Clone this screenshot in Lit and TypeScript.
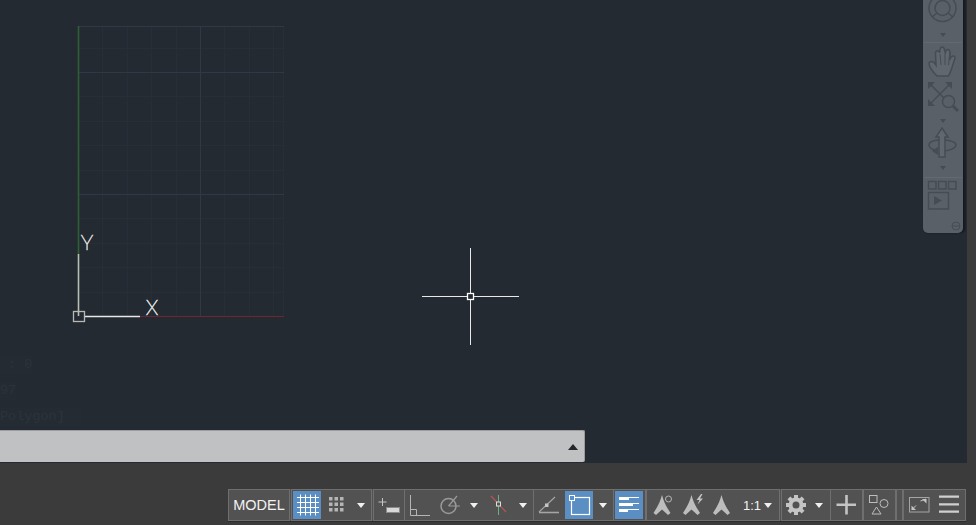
import { LitElement, html, svg, css } from "lit";
import { customElement } from "lit/decorators.js";

const ICON = "#c4c4c4";
const STEP = 24.4;

// ---------- status bar ----------

type Tool = { w: number; icon?: unknown; label?: string; on?: boolean; caret?: boolean };
type Group = { w: number; after?: number; tools: Tool[] };

const gridIcon = svg`<g stroke="#fff" stroke-width="1">
  ${[7.5, 12.5, 17.5, 22.5].map((x) => svg`<path d="M${x} 3.5V24.5" />`)}
  ${[6.5, 11.5, 16.5, 21.5].map((y) => svg`<path d="M4 ${y}H26" />`)}
</g>`;

const snapIcon = svg`<g fill="#b5b5b5">
  ${[8, 13.5, 19].map((x) => [6, 11.5, 17].map((y) => svg`<rect x=${x} y=${y} width="3.5" height="3.5" />`))}
</g>`;

const inferIcon = svg`<path d="M7.5 7V15M3.5 11H11.5" stroke=${ICON} fill="none" />
  <rect x="11.5" y="16.5" width="13" height="5" fill="#d8d8d8" stroke="#8a8a8a" />`;

const orthoIcon = svg`<path d="M4.5 4V24.5H24M4.5 18.5H10.5V24.5" stroke="#b5b5b5" fill="none" />`;

const polarIcon = svg`<circle cx="14.5" cy="15" r="7.5" stroke="#9a9a9a" stroke-width="1.5" fill="none" />
  <path d="M14.5 15H26M14.5 15L23 5" stroke="#9a9a9a" stroke-width="1.2" fill="none" />`;

const trackIcon = svg`<path d="M7 5L22 21" stroke="#b8525a" stroke-width="1.2" />
  <path d="M14.5 4V24" stroke="#62b47c" stroke-width="1" />
  <rect x="12.5" y="11" width="4" height="4" fill="#555" stroke="#ddd" />`;

const angleIcon = svg`<path d="M4 21L20 6" stroke="#a5a5a5" stroke-width="1.2" />
  <path d="M4 21.5H24" stroke="#a5a5a5" stroke-width="1.6" />
  <rect x="10" y="12.5" width="3.5" height="3.5" fill="#c4c4c4" />`;

const selectIcon = svg`<rect x="6.5" y="6.5" width="18" height="17" fill="none" stroke="#fff" stroke-width="1.2" />
  <rect x="4.5" y="4.5" width="5" height="5" fill="#5b8ec2" stroke="#fff" />`;

const rowsIcon = svg`<g fill="#fff">
  ${[6, 12, 18].map(
    (y, i) => svg`<rect x="4" y=${y} width=${[10, 14, 9][i]} height="3" />
      <rect x=${[14, 18, 13][i]} y=${y} width=${[10, 6, 11][i]} height="1" />`
  )}
</g>`;

// annotation scale marker, same outline three times with a different mark
const annoShape = svg`<path d="M14 4C15.5 9 16.5 13 22.5 22L20 24L14 18.5L8 24L5.5 22C11.5 13 12.5 9 14 4Z" fill="#bdbdbd" />`;
const annoCircle = svg`${annoShape}<circle cx="20.5" cy="8" r="3" fill="none" stroke="#b5b5b5" />`;
const annoBolt = svg`<g transform="translate(1.5 0)">${annoShape}</g>
  <path d="M25 3L20.5 9H23.5L21.5 13.5L27 7.5H24L26.5 3Z" fill="#c4c4c4" />`;
const annoPlain = svg`<g transform="translate(.5 0)">${annoShape}</g>`;

const gearIcon = svg`<g fill=${ICON}>
  ${[0, 45, 90, 135, 180, 225, 270, 315].map(
    (a) => svg`<rect x="11" y="4" width="4" height="4" transform="rotate(${a} 13 14)" />`
  )}
</g><circle cx="13" cy="14" r="5.5" fill="none" stroke=${ICON} stroke-width="4" />`;

const plusIcon = svg`<path d="M14.5 4V23.5M4.5 13.7H24" stroke=${ICON} stroke-width="2.6" />`;

const shapesIcon = svg`<g fill="none" stroke="#bdbdbd">
  <rect x="4.5" y="4.5" width="7.5" height="7" />
  <circle cx="19" cy="12.5" r="4" />
  <path d="M11.5 16L16 23H7Z" />
</g>`;

const fullIcon = svg`<rect x="4.5" y="6.5" width="19.5" height="14.5" fill="none" stroke="#a5a5a5" />
  <path d="M7 18.5L11 14.5M15.5 10L21 8" stroke="#c4c4c4" fill="none" />
  <path d="M6.5 14.5V19H11ZM17 8H21.5V12.5Z" fill="#c4c4c4" />`;

const menuIcon = svg`<path d="M6 5.7H26M6 13.3H26M6 20.7H26" stroke="#cfcfcf" stroke-width="2.2" />`;

const GROUPS: Group[] = [
  { w: 62, after: 1, tools: [{ w: 58, label: "MODEL" }] },
  {
    w: 81,
    after: 1,
    tools: [
      { w: 28, icon: gridIcon, on: true },
      { w: 30, icon: snapIcon },
      { w: 19, caret: true },
    ],
  },
  { w: 32, after: -1, tools: [{ w: 28, icon: inferIcon }] },
  {
    w: 130,
    after: -1,
    tools: [
      { w: 28, icon: orthoIcon },
      { w: 30, icon: polarIcon },
      { w: 20, caret: true },
      { w: 29, icon: trackIcon },
      { w: 19, caret: true },
    ],
  },
  {
    w: 81,
    after: -1,
    tools: [
      { w: 30, icon: angleIcon },
      { w: 28, icon: selectIcon, on: true },
      { w: 19, caret: true },
    ],
  },
  { w: 33, tools: [{ w: 28, icon: rowsIcon, on: true }] },
  {
    w: 134,
    after: 1,
    tools: [
      { w: 28, icon: annoCircle },
      { w: 31, icon: annoBolt },
      { w: 29, icon: annoPlain },
      { w: 24, label: "1:1" },
      { w: 16, caret: true },
    ],
  },
  {
    w: 50,
    after: -1,
    tools: [
      { w: 26, icon: gearIcon },
      { w: 20, caret: true },
    ],
  },
  { w: 33, tools: [{ w: 29, icon: plusIcon }] },
  { w: 33, tools: [{ w: 29, icon: shapesIcon }] },
  { w: 7, tools: [] },
  {
    w: 63,
    tools: [
      { w: 28, icon: fullIcon },
      { w: 31, icon: menuIcon },
    ],
  },
];

@customElement("cad-status-bar")
export class CadStatusBar extends LitElement {
  static styles = css`
    :host {
      display: flex;
      justify-content: flex-end;
      padding: 26px 10px 0 0;
      font-family: "Liberation Sans", Arial, sans-serif;
    }
    .bar {
      display: flex;
      height: 32px;
      background: #525252;
      box-shadow: 0 1px 0 #2c2c2c;
    }
    .group {
      box-sizing: border-box;
      display: flex;
      align-items: center;
      height: 32px;
      padding: 0 1px;
      border: 1px solid #6f6f6f;
      flex: none;
    }
    .tool {
      display: flex;
      align-items: center;
      justify-content: center;
      height: 28px;
      flex: none;
      color: #f2f2f2;
      font-size: 14.5px;
    }
    .tool.on {
      background: #5b8ec2;
    }
    .tool.ratio {
      justify-content: flex-start;
      padding-left: 7px;
      box-sizing: border-box;
      font-size: 13px;
    }
    .caret {
      width: 0;
      height: 0;
      border-left: 4px solid transparent;
      border-right: 4px solid transparent;
      border-top: 5px solid #f0f0f0;
    }
    svg {
      display: block;
    }
  `;

  renderTool(t: Tool) {
    const cls = `tool${t.on ? " on" : ""}${t.label === "1:1" ? " ratio" : ""}`;
    return html`<div class=${cls} style="width:${t.w}px">
      ${t.label ?? ""}
      ${t.caret ? html`<div class="caret"></div>` : ""}
      ${t.icon
        ? html`<svg width=${t.w} height="28" viewBox="0 0 ${t.w} 28">${t.icon}</svg>`
        : ""}
    </div>`;
  }

  render() {
    return html`<div class="bar">
      ${GROUPS.map(
        (g) => html`<div class="group" style="width:${g.w}px;margin-right:${g.after ?? 0}px">
          ${g.tools.map((t) => this.renderTool(t))}
        </div>`
      )}
    </div>`;
  }
}

// ---------- navigation bar floating on the drawing ----------

@customElement("cad-nav-bar")
export class CadNavBar extends LitElement {
  static styles = css`
    :host {
      display: block;
      width: 40px;
      height: 233px;
      background: #596068;
      border-radius: 0 0 5px 5px;
      box-shadow: 1px 0 2px #14181d, 3px 0 0 #1b2128;
    }
    svg {
      display: block;
    }
  `;

  render() {
    const ink = "#454c53";
    return html`<svg width="40" height="233" viewBox="0 0 40 233" fill="none" stroke=${ink} stroke-width="1.5">
      <circle cx="19.5" cy="8" r="13.5" />
      <circle cx="19.5" cy="8" r="7.5" />
      <path d="M9 17L14 13M30 17L25 13" />
      <path d="M17 33H23L20 37Z" fill=${ink} stroke="none" />
      <path d="M1 42.5H39" stroke="#62696f" stroke-width="1" />

      <path
        d="M14 76C10 72 6 67 6 63C8 60 11 62 13 65L12.5 53C13 50 16 50 16.5 53L17 50C17.5 46 21 46 21.5 50L22.5 52C23.5 48 27 49 27 53L26.5 60C28.5 55 32 55 32 58L28.5 69C27.5 72 26.5 74 25.5 76Z"
        fill="#60676e"
      />
      <path d="M17 54L18 65M22 52L22 65M27 53L25.5 65" stroke-width="1" />

      <path d="M7 84L21 98M27 84L7 104" />
      <path d="M5 82H12L5 89ZM29 82H22L29 89ZM5 106V99L12 106Z" fill=${ink} stroke="none" />
      <circle cx="25.5" cy="101.5" r="6" />
      <path d="M30 106L35 111" stroke-width="3" />
      <path d="M17 119H23L20 123Z" fill=${ink} stroke="none" />

      <path d="M12 150C7 149 6 146 6 145C6 142 11 140 19 140C27 140 33 142 33 145C33 148 27 150 22 151" />
      <path d="M19 128L25 137H22V157H16V137H13Z" fill="#60676e" />
      <path d="M15 147V155L9 151Z" fill=${ink} stroke="none" />
      <path d="M17 166H23L20 170Z" fill=${ink} stroke="none" />
      <path d="M1 177.5H39" stroke="#62696f" stroke-width="1" />

      <rect x="5.5" y="181.5" width="7.5" height="7.5" />
      <rect x="15.5" y="181.5" width="7.5" height="7.5" />
      <rect x="25.5" y="181.5" width="7.5" height="7.5" />
      <rect x="5.5" y="192.5" width="20" height="16.5" />
      <path d="M11 196V205L19 200.5Z" fill=${ink} stroke="none" />
      <circle cx="33" cy="226" r="4" stroke-width="1" />
      <path d="M29.5 226H36.5" stroke-width="1" />
    </svg>`;
  }
}

// ---------- root ----------

@customElement("app-root")
export class AppRoot extends LitElement {
  static styles = css`
    :host {
      display: grid;
      grid-template-columns: 967px 9px;
      grid-template-rows: 463px 62px;
      width: 976px;
      height: 525px;
      overflow: hidden;
      background: #3b3b3b;
    }
    .viewport {
      position: relative;
      overflow: hidden;
      background: #232a31;
    }
    .canvas {
      position: absolute;
      inset: 0;
    }
    .axis-label {
      font-family: Roboto, "Liberation Sans", sans-serif;
      font-weight: 100;
      font-size: 21px;
      fill: #f4f4f4;
      stroke: #e4e4e4;
      stroke-width: 0.45px;
      text-anchor: middle;
    }
    .nav {
      position: absolute;
      top: 0;
      left: 923px;
    }
    .history {
      position: absolute;
      left: 0;
      top: 356px;
      display: flex;
      flex-direction: column;
      align-items: flex-start;
      gap: 8px;
      font-family: "Liberation Mono", monospace;
      font-size: 13.5px;
      line-height: 18px;
      color: #2c333c;
    }
    .history span {
      background: #242b33;
    }
    .cmdline {
      position: absolute;
      left: 0;
      bottom: 1px;
      width: 585px;
      height: 32px;
      box-sizing: border-box;
      display: flex;
      align-items: center;
      justify-content: flex-end;
      padding-right: 6px;
      background: #c0c1c2;
      border-top: 1px solid #9c9c9c;
      border-right: 1px solid #9c9c9c;
      border-radius: 0 2px 2px 0;
    }
    .cmdline i {
      width: 0;
      height: 0;
      border-left: 5px solid transparent;
      border-right: 5px solid transparent;
      border-bottom: 6px solid #23262a;
    }
    .status {
      grid-column: 1 / 3;
    }
  `;

  renderGrid() {
    const xs = Array.from({ length: 9 }, (_, i) => 78 + i * STEP);
    const ys = Array.from({ length: 13 }, (_, i) => 23.2 + i * STEP).filter((y) => y > 30);
    return svg`
      <g stroke="#272e38" stroke-width="1" shape-rendering="crispEdges">
        ${xs.slice(1).map((x) => svg`<path d="M${Math.round(x)}.5 26V316" />`)}
        ${ys.map((y) => svg`<path d="M78 ${Math.round(y)}.5H284" />`)}
        <path d="M283.5 26V316" />
      </g>
      <g stroke="#303845" stroke-width="1" shape-rendering="crispEdges">
        <path d="M78 26.5H284M78 72.5H284M78 194.5H284M200.5 26V316" />
      </g>`;
  }

  render() {
    return html`
      <div class="viewport">
        <svg class="canvas" width="967" height="463" viewBox="0 0 967 463" fill="none">
          ${this.renderGrid()}
          <path d="M78.5 26V254" stroke="#2f5f3a" stroke-width="1.6" />
          <path d="M140 316.5H284" stroke="#6e2630" />
          <path d="M78.5 254V316" stroke="#b4c0b4" stroke-width="1.6" />
          <path d="M84 316.5H140" stroke="#e8e8e8" stroke-width="1.6" />
          <rect x="73.5" y="311.5" width="11" height="10" stroke="#b8b8b8" stroke-width="1.3" />
          <text class="axis-label" x="87" y="250">Y</text>
          <text class="axis-label" x="152" y="315">X</text>
          <path d="M422 296.5H467M474 296.5H519M470.5 248V293M470.5 300V345" stroke="#e8e8e8" />
          <rect x="467.5" y="293.5" width="6" height="6" stroke="#fff" stroke-width="1.3" />
        </svg>
        <div class="history">
          <span>&nbsp;: 0</span>
          <span>97</span>
          <span>Polygon]&nbsp;&nbsp;</span>
        </div>
        <cad-nav-bar class="nav"></cad-nav-bar>
        <div class="cmdline"><i></i></div>
      </div>
      <div></div>
      <cad-status-bar class="status"></cad-status-bar>
    `;
  }
}
